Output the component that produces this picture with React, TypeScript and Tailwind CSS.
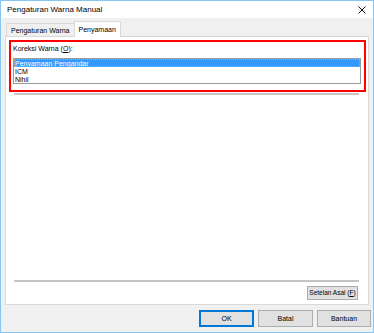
import React from "react";

const items = ["Penyamaan Pengandar", "ICM", "Nihil"];

const Btn = ({
  children,
  primary,
  className = "",
}: {
  children: React.ReactNode;
  primary?: boolean;
  className?: string;
}) => (
  <button
    className={`h-[17px] flex items-center justify-center whitespace-nowrap bg-[#e1e1e1] text-black leading-none ${
      primary ? "border-2 border-[#0078d7]" : "border border-[#adadad]"
    } ${className}`}
  >
    {children}
  </button>
);

export default function App() {
  return (
    <div
      className="w-[374px] h-[333px] flex flex-col bg-[#f0f0f0] border border-[#86c6f2] text-black"
      style={{ fontFamily: '"Liberation Sans", Arial, sans-serif' }}
    >
      {/* title bar */}
      <div className="h-[17px] bg-white flex items-center justify-between pl-[6px] pr-[7px] shrink-0">
        <span className="text-[8px] leading-none">Pengaturan Warna Manual</span>
        <svg width="8" height="8" viewBox="0 0 8 8">
          <path d="M0.5 0.5 L7.5 7.5 M7.5 0.5 L0.5 7.5" stroke="#111" strokeWidth="1" />
        </svg>
      </div>

      {/* tabs */}
      <div className="h-[18px] flex items-end pl-[5px] shrink-0">
        <div className="h-[13px] px-[4px] flex items-center bg-[#f0f0f0] border border-b-0 border-[#d9d9d9] text-[7px] leading-none">
          Pengaturan Warna
        </div>
        <div className="h-[16px] px-[4px] flex items-center bg-white border border-b-0 border-[#d9d9d9] -ml-px text-[7px] leading-none relative top-px">
          Penyamaan
        </div>
      </div>

      {/* panel */}
      <div className="mx-[4px] h-[269px] bg-white border border-[#d9d9d9] flex flex-col shrink-0">
        <div className="mt-[3px] ml-[3px] w-[357px] h-[52px] border-2 border-[#ff0000] flex flex-col pl-[2px] pr-[3px]">
          <div className="text-[7px] leading-[10px] mt-[2px]">
            Koreksi Warna (<span className="underline">O</span>):
          </div>
          <div className="mt-[4px] h-[26px] border border-[#9a9a9a] bg-white flex flex-col">
            {items.map((t, i) => (
              <div
                key={t}
                className={`h-[8px] px-[1px] flex items-center text-[7px] leading-none ${
                  i === 0
                    ? "bg-[#3399ff] text-white outline outline-1 outline-dotted outline-[#e0a060] -outline-offset-1"
                    : ""
                }`}
              >
                {t}
              </div>
            ))}
          </div>
        </div>
        <div className="mt-[1px] ml-[8px] w-[345px] border-t-2 border-[#c4c4c4]" />

        <div className="flex-1" />

        <div className="ml-[8px] w-[345px] border-t-2 border-[#c4c4c4]" />
        <div className="flex justify-end pr-[10px] mt-[4px] mb-[4px]">
          <Btn className="w-[51px] !h-[14px] text-[6.5px]">
            Setelan Asal (<span className="underline">F</span>)
          </Btn>
        </div>
      </div>

      {/* footer */}
      <div className="flex-1 flex items-center justify-end gap-[4px] pr-[2px] pb-[1px]">
        <Btn primary className="w-[55px] text-[7px]">
          OK
        </Btn>
        <Btn className="w-[55px] text-[7px]">Batal</Btn>
        <Btn className="w-[54px] text-[7px]">Bantuan</Btn>
      </div>
    </div>
  );
}
